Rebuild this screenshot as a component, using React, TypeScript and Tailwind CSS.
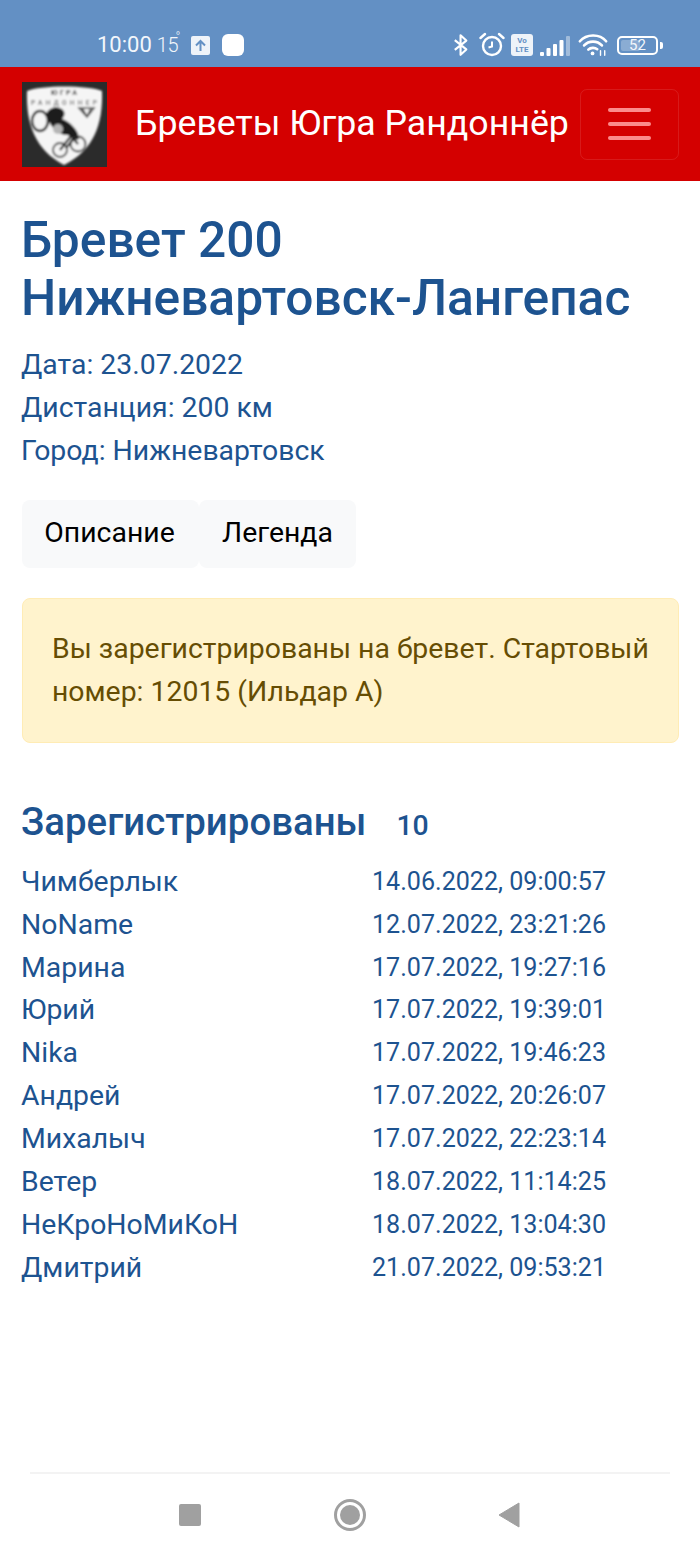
import type { FC } from 'react';

const riders = [
  ['Чимберлык', '14.06.2022, 09:00:57'],
  ['NoName', '12.07.2022, 23:21:26'],
  ['Марина', '17.07.2022, 19:27:16'],
  ['Юрий', '17.07.2022, 19:39:01'],
  ['Nika', '17.07.2022, 19:46:23'],
  ['Андрей', '17.07.2022, 20:26:07'],
  ['Михалыч', '17.07.2022, 22:23:14'],
  ['Ветер', '18.07.2022, 11:14:25'],
  ['НеКроНоМиКоН', '18.07.2022, 13:04:30'],
  ['Дмитрий', '21.07.2022, 09:53:21'],
];

const StatusBar: FC = () => (
  <div className="h-[67px] bg-[#6390c4] flex items-end justify-between pb-[8px] pl-[97px] pr-[37px] text-[#f2f6fb]">
    <div className="flex items-center h-[28px]">
      <span className="text-[22px] leading-none">10:00</span>
      <span className="ml-[5px] w-[20px] text-[20px] leading-none font-light tracking-[-0.5px] relative">
        15<span className="absolute -top-[5px] -right-[3px] text-[13px]">°</span>
      </span>
      <span className="ml-[14px] w-[19px] h-[19px] rounded-[2px] bg-[#eef3f9] flex items-center justify-center">
        <svg width="13" height="13" viewBox="0 0 13 13" fill="none" stroke="#6390c4" strokeWidth="2">
          <path d="M6.5 12V2M2 6.5 6.5 2 11 6.5" />
        </svg>
      </span>
      <span className="ml-[12px] w-[22px] h-[22px] rounded-[6px] bg-white" />
    </div>
    <div className="flex items-center h-[28px]">
      <svg width="16" height="26" viewBox="0 0 18 26" fill="none" stroke="white" strokeWidth="2.4" strokeLinejoin="round">
        <path d="M2 7.5 15 18 8.500 24V2L15 8 2 18.500" />
      </svg>
      <svg className="ml-[10px]" width="26" height="26" viewBox="0 0 26 26" fill="none" stroke="white" strokeWidth="2.4">
        <circle cx="13" cy="14" r="9" />
        <path d="M13 9.500V14.500L9.500 15.500" strokeWidth="2" />
        <path d="M1.500 6 6 2M24.500 6 20 2" strokeLinecap="round" />
      </svg>
      <span className="ml-[6px] w-[22px] h-[22px] rounded-[3px] bg-[#eef3f9] flex flex-col items-center justify-center text-[#6390c4] text-[8px] leading-[9px] font-bold">
        <span>Vo</span>
        <span>LTE</span>
      </span>
      <svg className="ml-[6px]" width="32" height="24" viewBox="0 0 32 24" fill="white">
        <rect x="1" y="19" width="4" height="4" rx="1" />
        <rect x="7.500" y="15" width="4" height="8" rx="1" />
        <rect x="14" y="11" width="4" height="12" rx="1" />
        <rect x="20.500" y="7" width="4" height="16" rx="1" />
        <rect x="27" y="3" width="4" height="20" rx="1" opacity="0.4" />
      </svg>
      <svg className="ml-[7px]" width="30" height="24" viewBox="0 0 32 24" fill="none" stroke="white" strokeWidth="2.8" strokeLinecap="round">
        <path d="M2 8C9-0 23-.500 30 8" />
        <path d="M6.500 12.500C11.500 7 20.500 7 25.500 12.500" />
        <path d="M11 17C13.500 14.500 18 14.500 20.500 16.500" />
        <circle cx="15.500" cy="21" r="2" fill="white" stroke="none" />
        <path d="M24 18v5M28.500 18v5" strokeWidth="1.500" />
      </svg>
      <span className="ml-[9px] w-[41px] h-[19px] rounded-[5px] border-2 border-white relative flex items-center justify-center text-[15px] leading-none overflow-hidden">
        <span className="absolute left-[2px] top-[2px] bottom-[2px] w-[19px] rounded-[2px] bg-white/25" />
        <span className="relative">52</span>
      </span>
      <span className="ml-[2px] w-[3px] h-[7px] rounded-r-[2px] bg-white" />
    </div>
  </div>
);

const Logo: FC = () => (
  <svg width="85" height="85" viewBox="0 0 85 85" className="shrink-0">
    <defs>
      <filter id="soft" x="-5%" y="-5%" width="110%" height="110%">
        <feGaussianBlur stdDeviation="0.8" />
      </filter>
    </defs>
    <rect width="85" height="85" fill="#2b2b2b" />
    <g filter="url(#soft)">
      <path d="M5 9C18 3 67 3 80 9C81 42 72 68 42 83C13 68 4 42 5 9Z" fill="#f5f5f5" />
      <text x="42" y="13" textAnchor="middle" fontSize="7" fontWeight="700" fill="#333" textLength="26">ЮГРА</text>
      <text x="42" y="23" textAnchor="middle" fontSize="6.500" fontWeight="500" fill="#555" textLength="66">РАНДОННЕР</text>
      <path d="M57 26h15l-7 9Z M60 26l5 9 M69 26l-4 9" fill="none" stroke="#444" strokeWidth="1.600" />
      <ellipse cx="18" cy="39" rx="8" ry="10" fill="none" stroke="#222" strokeWidth="2.500" />
      <path d="M24 32c3-7 12-9 17-4 3 3 1 7-1 9 7 2 17 11 17 20-4 2-8-1-11-4-8 1-19-8-22-21Z" fill="#1d1d1d" />
      <circle cx="36" cy="47" r="5" fill="#b5b5b5" />
      <circle cx="38" cy="68" r="7" fill="none" stroke="#444" strokeWidth="1.800" />
      <circle cx="56" cy="62" r="7.500" fill="none" stroke="#333" strokeWidth="1.800" />
      <path d="M38 68 49 54l7 8M44 66l10-12" fill="none" stroke="#222" strokeWidth="2.200" />
    </g>
  </svg>
);

const Header: FC = () => (
  <header className="h-[114px] bg-[#d40000] flex items-center pl-[22px] pr-[21px]">
    <Logo />
    <span className="ml-[28px] flex-1 text-[35.7px] leading-none text-white whitespace-nowrap">
      Бреветы Югра Рандоннёр
    </span>
    <button className="w-[99px] h-[71px] rounded-[7px] border border-white/10 flex flex-col items-center justify-center gap-[10px]">
      <span className="w-[43px] h-[4px] rounded-full bg-[#fc8c8c]" />
      <span className="w-[43px] h-[4px] rounded-full bg-[#fc8c8c]" />
      <span className="w-[43px] h-[4px] rounded-full bg-[#fc8c8c]" />
    </button>
  </header>
);

const NavBar: FC = () => (
  <div className="h-[84px] mx-[30px] border-t-2 border-[#f3f3f3] flex items-center justify-between pl-[149px] pr-[150px]">
    <span className="w-[22px] h-[22px] rounded-[2px] bg-[#a0a0a0]" />
    <span className="w-[32px] h-[32px] rounded-full border-[3px] border-[#a0a0a0] flex items-center justify-center">
      <span className="w-[20px] h-[20px] rounded-full bg-[#a0a0a0]" />
    </span>
    <svg width="22" height="26" viewBox="0 0 22 26" fill="#a0a0a0">
      <path d="M21 1 1 13l20 12Z" stroke="#a0a0a0" strokeWidth="1" strokeLinejoin="round" />
    </svg>
  </div>
);

export default function App() {
  return (
    <div className="w-[700px] h-[1556px] bg-white flex flex-col font-['Roboto',sans-serif] text-[#1d5390] text-[28.4px] leading-[42.9px]">
      <StatusBar />
      <Header />

      <main className="flex-1 pl-[22px] pr-[21px] pt-[30px]">
        <h1 className="-ml-px text-[49.7px] leading-[58px] font-medium">
          Бревет 200
          <br />
          Нижневартовск-Лангепас
        </h1>
        <div className="mt-[17px] -ml-px">
          <p>Дата: 23.07.2022</p>
          <p>Дистанция: 200 км</p>
          <p>Город: Нижневартовск</p>
        </div>

        <div className="mt-[27px] flex">
          <button className="h-[68px] w-[177px] pr-[2px] rounded-[8px] bg-[#f8f9fa] text-black">Описание</button>
          <button className="h-[68px] w-[157px] rounded-[8px] bg-[#f8f9fa] text-black">Легенда</button>
        </div>

        <div className="mt-[30px] h-[145px] pl-[29px] pr-[25px] py-[29px] rounded-[8px] bg-[#fff3cd] border border-[#ffecb5] text-[#664d03]">
          Вы зарегистрированы на бревет. Стартовый номер: 12015 (Ильдар А)
        </div>

        <h2 className="mt-[57px] -ml-px flex items-baseline text-[38.4px] leading-[44px] font-medium">
          Зарегистрированы
          <span className="ml-[30px] text-[28.4px]">10</span>
        </h2>

        <div className="mt-[13px] -ml-px">
          {riders.map(([name, date]) => (
            <div key={name} className="grid grid-cols-[351px_1fr]">
              <span>{name}</span>
              <span className="text-[25.1px]">{date}</span>
            </div>
          ))}
        </div>
      </main>

      <NavBar />
    </div>
  );
}
